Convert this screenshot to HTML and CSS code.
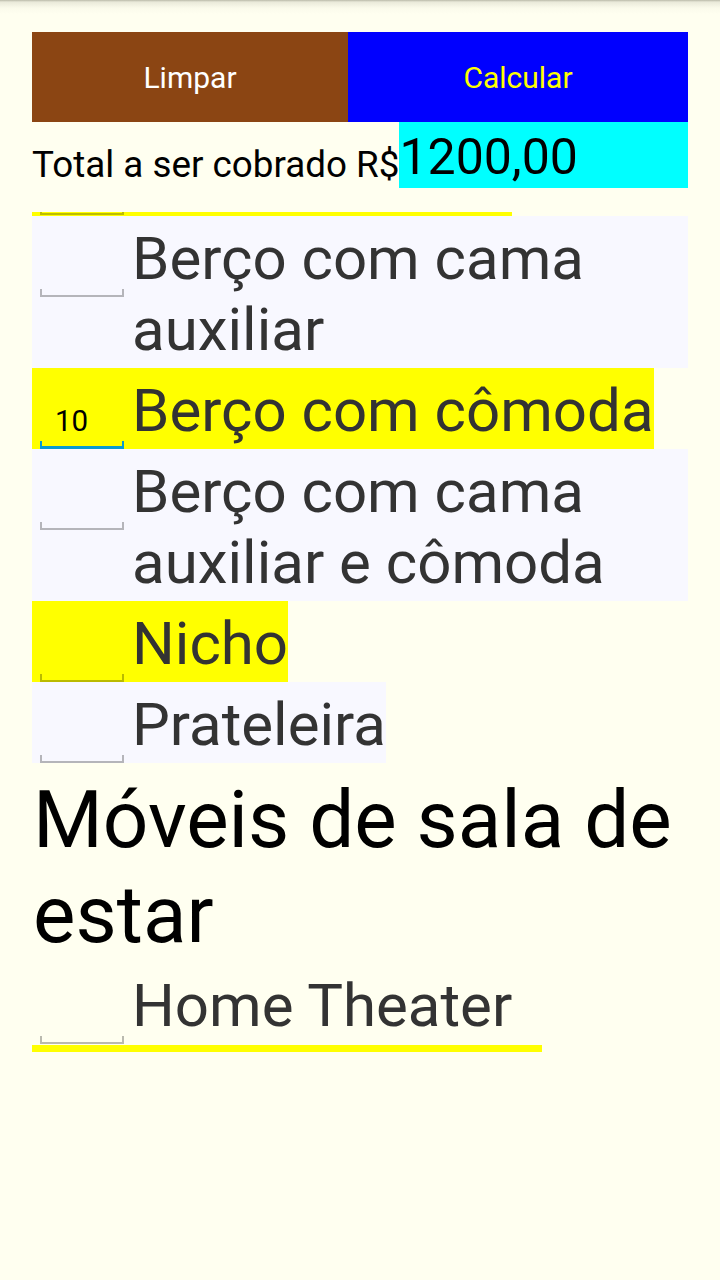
FILE: index.html
```html
<!DOCTYPE html>
<html lang="pt-BR">
<head>
<meta charset="utf-8">
<title>Orçamento</title>
<link rel="stylesheet" href="styles.css">
</head>
<body>
<div class="topshade"></div>
<main class="page">
  <div class="actions">
    <button class="btn btn-clear">Limpar</button>
    <button class="btn btn-calc">Calcular</button>
  </div>
  <div class="total">
    <span class="total-label">Total a ser cobrado R$</span>
    <span class="total-value">1200,00</span>
  </div>
  <div class="strip strip-top"><span class="bracket"></span></div>
  <div class="item ghost">
    <div class="qty"><span class="bracket"></span></div>
    <div class="name">Berço com cama auxiliar</div>
  </div>
  <div class="item yellow">
    <div class="qty focused">10<span class="bracket"></span></div>
    <div class="name">Berço com cômoda</div>
  </div>
  <div class="item ghost">
    <div class="qty"><span class="bracket"></span></div>
    <div class="name">Berço com cama auxiliar e cômoda</div>
  </div>
  <div class="item yellow">
    <div class="qty"><span class="bracket"></span></div>
    <div class="name">Nicho</div>
  </div>
  <div class="item ghost">
    <div class="qty"><span class="bracket"></span></div>
    <div class="name">Prateleira</div>
  </div>
  <h2 class="section">Móveis de sala de estar</h2>
  <div class="item plain">
    <div class="qty"><span class="bracket"></span></div>
    <div class="name">Home Theater</div>
  </div>
  <div class="strip strip-bottom"></div>
</main>
</body>
</html>
```
FILE: styles.css
```css
html, body {
  margin: 0;
  padding: 0;
  background: #fffff0;
  font-family: Roboto, "Noto Sans", "Liberation Sans", sans-serif;
}

.topshade {
  height: 14px;
  background: linear-gradient(to bottom, rgba(90, 90, 70, 0.42) 0, rgba(120, 120, 100, 0.16) 2px, rgba(200, 200, 180, 0.08) 8px, rgba(255, 255, 240, 0) 14px);
}

.page {
  padding: 18px 32px 0 32px;
}

.actions {
  display: grid;
  grid-template-columns: 316px 340px;
  height: 90px;
}

.btn {
  border: none;
  margin: 0;
  padding: 0;
  font-family: Roboto, "Noto Sans", sans-serif;
  font-size: 30px;
  display: flex;
  align-items: center;
  justify-content: center;
}

.btn-clear {
  background: #8b4513;
  color: #ffffff;
}

.btn-calc {
  background: #0000ff;
  color: #ffff00;
}

.total {
  display: flex;
  align-items: flex-start;
}

.total-label {
  font-size: 36.8px;
  line-height: 43px;
  padding-top: 21px;
  color: #000;
}

.total-value {
  flex: 1;
  background: #00ffff;
  font-size: 50px;
  line-height: 59px;
  color: #000;
  height: 66px;
  box-sizing: border-box;
  padding-top: 6px;
}

.strip {
  background: #ffff00;
  position: relative;
  overflow: hidden;
}

.strip-top {
  margin-top: 24px;
  width: 480px;
  height: 4px;
}

.strip-top .bracket {
  position: absolute;
  left: 8px;
  width: 84px;
  bottom: 1px;
  height: 8px;
  box-sizing: border-box;
  border: 2px solid rgba(0, 0, 0, 0.26);
  border-top: none;
}

.strip-bottom {
  margin-top: 1px;
  width: 510px;
  height: 7px;
}

.item {
  display: flex;
  align-items: baseline;
  width: fit-content;
  max-width: 656px;
}

.ghost { background: #f8f8ff; }
.yellow { background: #ffff00; }
.plain { background: transparent; }

.qty {
  position: relative;
  flex: 0 0 100px;
  width: 100px;
  height: 81px;
  box-sizing: border-box;
  padding: 36px 0 0 23px;
  font-size: 29.5px;
  line-height: 34px;
  color: #000;
}

.qty::before {
  content: "\200b";
}

.bracket {
  position: absolute;
  left: 8px;
  right: 8px;
  bottom: 0;
  height: 8px;
  box-sizing: border-box;
  border: 2px solid rgba(0, 0, 0, 0.27);
  border-top: none;
}

.qty.focused .bracket {
  border-color: #0a9bd0;
  border-bottom-width: 3px;
}

.name {
  font-size: 60px;
  line-height: 71px;
  color: #333333;
  padding-bottom: 3px;
}

.section {
  margin: 10px 0 0 0;
  font-weight: normal;
  font-size: 80px;
  line-height: 95px;
  color: #000;
  padding-left: 1px;
}
```
